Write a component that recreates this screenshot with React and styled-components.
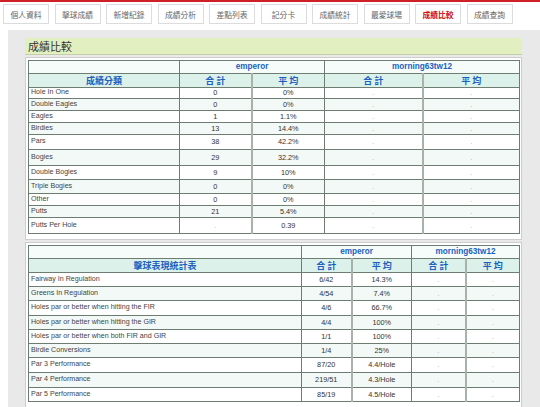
import React from 'react'
import styled, { createGlobalStyle } from 'styled-components'

const GlobalStyle = createGlobalStyle`
  body {
    margin: 0;
    background: #fff;
    font-family: "Liberation Sans", "Noto Sans CJK TC", sans-serif;
  }
`

const Page = styled.div`
  width: 540px;
  height: 407px;
  border-top: 2px solid #cf2027;
  box-sizing: border-box;
  overflow: hidden;
`

const Nav = styled.ul`
  display: flex;
  gap: 5.5px;
  list-style: none;
  margin: 0;
  padding: 2px 0 6px 3px;
`

const Tab = styled.li`
  width: 46px;
  height: 20px;
  box-sizing: border-box;
  border: 1px solid #dcdcdc;
  background: #fff;
  display: flex;
  align-items: center;
  justify-content: center;
  font-family: "Noto Sans CJK TC", sans-serif;
  font-size: 7.8px;
  color: ${p => (p.active ? '#d0121b' : '#666')};
  font-weight: ${p => (p.active ? 'bold' : 'normal')};
`

const Main = styled.div`
  margin-left: 8px;
  background: #e9e9e9;
  padding: 8px 18px 4px 17px;
  height: 377px;
  box-sizing: border-box;
`

const Title = styled.h2`
  margin: 0 0 2px;
  height: 17px;
  box-sizing: border-box;
  background: #e2efc0;
  border-bottom: 1px solid #c4cfa6;
  font-family: "Noto Sans CJK TC", sans-serif;
  font-weight: normal;
  font-size: 11px;
  line-height: 16px;
  color: #333;
  padding-left: 3px;
`

const Box = styled.div`
  background: #fff;
  border: 1px solid #cdcdcd;
  padding: 2px 2px 5px;
  & + & {
    margin-top: 2px;
  }
`

const Grid = styled.table`
  width: 100%;
  border-collapse: collapse;
  table-layout: fixed;
  border: 1px solid #6d7d71;
`

const HeadRow = styled.tr`
  height: ${p => p.h}px;
  background: ${p => (p.tone === 'light' ? '#f6fcfa' : '#dcf1ea')};
`

const HeadCell = styled.th`
  padding: 0;
  color: #1b5fc0;
  font-family: ${p => (p.cjk ? '"Noto Sans CJK TC", sans-serif' : '"Liberation Sans", sans-serif')};
  font-size: ${p => (p.cjk ? '9px' : '8.2px')};
  font-weight: bold;
  line-height: 1;
  border: 1px solid #6d7d71;
  ${p => p.inner && 'border-left: 2px solid #a9b1ab;'}
`

const Row = styled.tr`
  height: ${p => p.h}px;
  background: ${p => (p.alt ? '#f3f9f7' : '#fff')};
`

const Label = styled.td`
  padding: 0 0 0 2px;
  text-align: left;
  color: #444;
  font-size: 7.1px;
  line-height: 1;
  border: 1px solid #6d7d71;
  white-space: nowrap;
  overflow: hidden;
`

const Value = styled.td`
  padding: 0;
  text-align: center;
  color: ${p => (p.empty ? '#a8a8a8' : '#333')};
  font-size: 7.3px;
  line-height: 1;
  border: 1px solid #6d7d71;
  ${p => p.inner && 'border-left: 2px solid #a9b1ab;'}
`

const tabs = ['個人資料', '擊球成績', '新增紀錄', '成績分析', '差點列表', '記分卡', '成績統計', '最愛球場', '成績比較', '成績查詢']

const scoreRows = [
  { label: 'Hole In One', total: '0', avg: '0%', h: 11 },
  { label: 'Double Eagles', total: '0', avg: '0%', h: 12 },
  { label: 'Eagles', total: '1', avg: '1.1%', h: 12 },
  { label: 'Birdies', total: '13', avg: '14.4%', h: 12 },
  { label: 'Pars', total: '38', avg: '42.2%', h: 15 },
  { label: 'Bogies', total: '29', avg: '32.2%', h: 16 },
  { label: 'Double Bogies', total: '9', avg: '10%', h: 14 },
  { label: 'Triple Bogies', total: '0', avg: '0%', h: 14 },
  { label: 'Other', total: '0', avg: '0%', h: 12 },
  { label: 'Putts', total: '21', avg: '5.4%', h: 12 },
  { label: 'Putts Per Hole', total: '.', avg: '0.39', h: 16 },
]

const shotRows = [
  { label: 'Fairway In Regulation', total: '6/42', avg: '14.3%', h: 14 },
  { label: 'Greens In Regulation', total: '4/54', avg: '7.4%', h: 14 },
  { label: 'Holes par or better when hitting the FIR', total: '4/6', avg: '66.7%', h: 15 },
  { label: 'Holes par or better when hitting the GIR', total: '4/4', avg: '100%', h: 14 },
  { label: 'Holes par or better when both FIR and GIR', total: '1/1', avg: '100%', h: 14 },
  { label: 'Birdie Conversions', total: '1/4', avg: '25%', h: 14 },
  { label: 'Par 3 Performance', total: '87/20', avg: '4.4/Hole', h: 15 },
  { label: 'Par 4 Performance', total: '219/51', avg: '4.3/Hole', h: 15 },
  { label: 'Par 5 Performance', total: '85/19', avg: '4.5/Hole', h: 14 },
]

function CompareTable({ title, cols, rows }) {
  return (
    <Box>
      <Grid>
        <colgroup>
          {cols.map((w, i) => (
            <col key={i} style={{ width: w }} />
          ))}
        </colgroup>
        <thead>
          <HeadRow h={13} tone="light">
            <HeadCell />
            <HeadCell colSpan={2}>emperor</HeadCell>
            <HeadCell colSpan={2}>morning63tw12</HeadCell>
          </HeadRow>
          <HeadRow h={14}>
            <HeadCell cjk>{title}</HeadCell>
            <HeadCell cjk>合 計</HeadCell>
            <HeadCell cjk inner>平 均</HeadCell>
            <HeadCell cjk>合 計</HeadCell>
            <HeadCell cjk inner>平 均</HeadCell>
          </HeadRow>
        </thead>
        <tbody>
          {rows.map((r, i) => (
            <Row key={r.label} h={r.h} alt={i % 2 === 1}>
              <Label>{r.label}</Label>
              <Value empty={r.total === '.'}>{r.total}</Value>
              <Value inner>{r.avg}</Value>
              <Value empty>.</Value>
              <Value empty inner>.</Value>
            </Row>
          ))}
        </tbody>
      </Grid>
    </Box>
  )
}

export default function App() {
  return (
    <>
      <GlobalStyle />
      <Page>
        <Nav>
          {tabs.map(t => (
            <Tab key={t} active={t === '成績比較'}>{t}</Tab>
          ))}
        </Nav>
        <Main>
          <Title>成績比較</Title>
          <CompareTable title="成績分類" cols={[151, 72, 73, 98, 97]} rows={scoreRows} />
          <CompareTable title="擊球表現統計表" cols={[273, 50, 60, 54, 54]} rows={shotRows} />
        </Main>
      </Page>
    </>
  )
}
